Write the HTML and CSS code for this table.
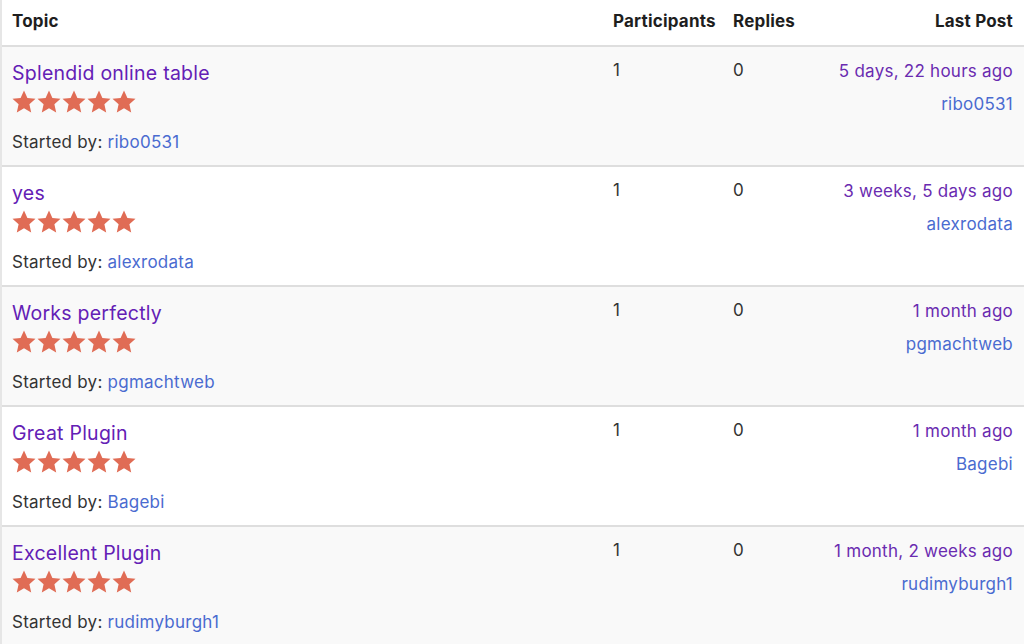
FILE: index.html
```html
<!DOCTYPE html>
<html lang="en">
<head>
<meta charset="utf-8">
<title>Reviews</title>
<link rel="stylesheet" href="styles.css">
</head>
<body>
<svg width="0" height="0" class="defs">
  <defs>
    <symbol id="star" viewBox="0 0 24 24">
      <path d="M12 0.6 L15.4 7.9 L23.5 8.8 L17.4 14.2 L19.2 22.4 L12 18.2 L4.8 22.4 L6.6 14.2 L0.5 8.8 L8.6 7.9 Z"/>
    </symbol>
  </defs>
</svg>
<div class="forum">
  <div class="row head">
    <div class="cell topic">Topic</div>
    <div class="cell">Participants</div>
    <div class="cell">Replies</div>
    <div class="cell last">Last Post</div>
  </div>

  <div class="row odd">
    <div class="cell topic">
      <a class="title" href="#">Splendid online table</a>
      <div class="stars"><svg><use href="#star"/></svg><svg><use href="#star"/></svg><svg><use href="#star"/></svg><svg><use href="#star"/></svg><svg><use href="#star"/></svg></div>
      <div class="by">Started by: <a class="user" href="#">ribo0531</a></div>
    </div>
    <div class="cell num">1</div>
    <div class="cell num">0</div>
    <div class="cell last"><a class="when" href="#">5 days, 22 hours ago</a><a class="user" href="#">ribo0531</a></div>
  </div>

  <div class="row">
    <div class="cell topic">
      <a class="title" href="#">yes</a>
      <div class="stars"><svg><use href="#star"/></svg><svg><use href="#star"/></svg><svg><use href="#star"/></svg><svg><use href="#star"/></svg><svg><use href="#star"/></svg></div>
      <div class="by">Started by: <a class="user" href="#">alexrodata</a></div>
    </div>
    <div class="cell num">1</div>
    <div class="cell num">0</div>
    <div class="cell last"><a class="when" href="#">3 weeks, 5 days ago</a><a class="user" href="#">alexrodata</a></div>
  </div>

  <div class="row odd">
    <div class="cell topic">
      <a class="title" href="#">Works perfectly</a>
      <div class="stars"><svg><use href="#star"/></svg><svg><use href="#star"/></svg><svg><use href="#star"/></svg><svg><use href="#star"/></svg><svg><use href="#star"/></svg></div>
      <div class="by">Started by: <a class="user" href="#">pgmachtweb</a></div>
    </div>
    <div class="cell num">1</div>
    <div class="cell num">0</div>
    <div class="cell last"><a class="when" href="#">1 month ago</a><a class="user" href="#">pgmachtweb</a></div>
  </div>

  <div class="row">
    <div class="cell topic">
      <a class="title" href="#">Great Plugin</a>
      <div class="stars"><svg><use href="#star"/></svg><svg><use href="#star"/></svg><svg><use href="#star"/></svg><svg><use href="#star"/></svg><svg><use href="#star"/></svg></div>
      <div class="by">Started by: <a class="user" href="#">Bagebi</a></div>
    </div>
    <div class="cell num">1</div>
    <div class="cell num">0</div>
    <div class="cell last"><a class="when" href="#">1 month ago</a><a class="user" href="#">Bagebi</a></div>
  </div>

  <div class="row odd">
    <div class="cell topic">
      <a class="title" href="#">Excellent Plugin</a>
      <div class="stars"><svg><use href="#star"/></svg><svg><use href="#star"/></svg><svg><use href="#star"/></svg><svg><use href="#star"/></svg><svg><use href="#star"/></svg></div>
      <div class="by">Started by: <a class="user" href="#">rudimyburgh1</a></div>
    </div>
    <div class="cell num">1</div>
    <div class="cell num">0</div>
    <div class="cell last"><a class="when" href="#">1 month, 2 weeks ago</a><a class="user" href="#">rudimyburgh1</a></div>
  </div>
</div>
</body>
</html>
```

FILE: styles.css
```css
* { box-sizing: border-box; }
html, body { margin: 0; padding: 0; background: #fff; }
body {
  font-family: Inter, "Noto Sans", sans-serif;
  color: #333;
  font-size: 17px;
  letter-spacing: 0.25px;
  overflow: hidden;
  height: 644px;
}
.defs { position: absolute; width: 0; height: 0; }
.forum {
  border-left: 2px solid #e6e6e6;
  min-height: 644px;
}
.row {
  display: grid;
  grid-template-columns: 611px 120px 100px 1fr;
  border-bottom: 2px solid #dedede;
  height: 120px;
}
.row.head {
  height: 47px;
  background: #fff;
  font-weight: 700;
  color: #1e1e1e;
  font-size: 17px;
  letter-spacing: 0.2px;
}
.row.head .cell { padding-top: 11px; }
.row.odd { background: #f9f9f9; }
.cell { padding-top: 13px; line-height: 20px; }
.topic { padding-left: 10px; }
.last { padding-right: 11px; text-align: right; }
.num { color: #333; padding-top: 13px; }
a { text-decoration: none; }
.title {
  display: block;
  color: #6320b5;
  font-size: 19.5px;
  letter-spacing: 0.25px;
  line-height: 26px;
}
.stars {
  display: flex;
  gap: 1px;
  margin-top: 4px;
  height: 24px;
}
.stars svg {
  width: 24px;
  height: 24px;
  fill: #e06c55;
}
.by {
  margin-top: 18px;
  color: #333;
}
.user { color: #4a6bd0; }
.last .when {
  display: block;
  color: #6a2bb0;
  line-height: 22px;
}
.last .user {
  display: block;
  margin-top: 11px;
  line-height: 22px;
}
```
